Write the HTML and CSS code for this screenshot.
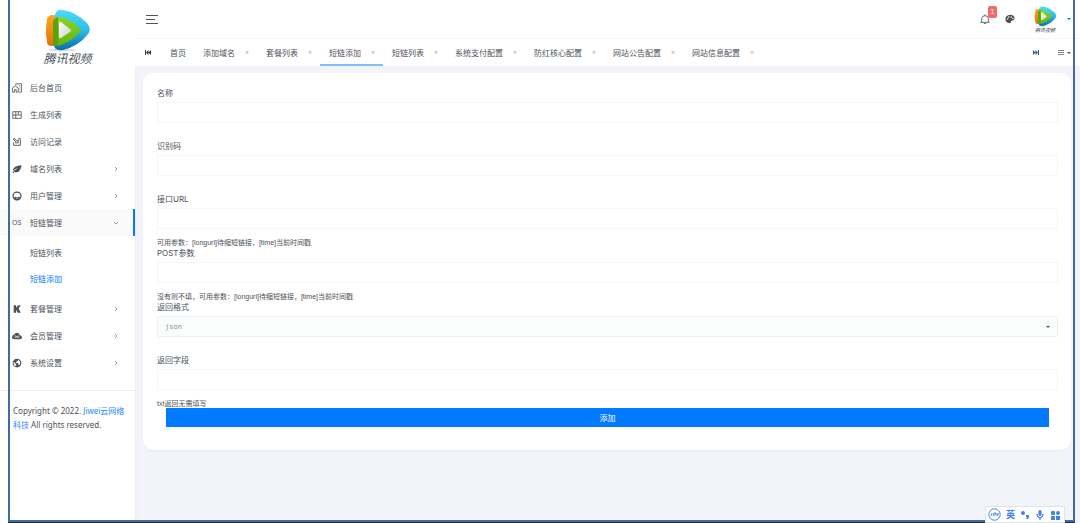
FILE: index.html
```html
<!DOCTYPE html>
<html lang="zh-CN">
<head>
<meta charset="utf-8">
<title>短链添加</title>
<link rel="stylesheet" href="styles.css">
</head>
<body>
<svg class="defs" aria-hidden="true">
  <defs>
    <linearGradient id="orange" x2="0" y2="1"><stop stop-color="#ffa51c"/><stop offset="1" stop-color="#e2700c"/></linearGradient>
    <linearGradient id="blue" x2="0" y2="1"><stop stop-color="#4fdcf6"/><stop offset=".5" stop-color="#2dbce6"/><stop offset="1" stop-color="#0b6ca8"/></linearGradient>
    <linearGradient id="green" x2="0" y2="1"><stop stop-color="#8ed321"/><stop offset="1" stop-color="#62b40c"/></linearGradient>
    <linearGradient id="white" x2="1" y2="1"><stop stop-color="#fff"/><stop offset="1" stop-color="#c9d0c8"/></linearGradient>
    <symbol id="play-logo" viewBox="0 0 46 43">
      <ellipse cx="17" cy="41" rx="14" ry="1.500" fill="#ddd"/>
      <path d="M2 10Q3 6 8 6L16 7V36L7 37Q2 37 2 33Q0 22 2 10Z" fill="url(#orange)"/>
      <path d="M10 6Q11 0 18 1Q31 3 42 14Q47 20 43 25Q34 37 18 41Q9 42 9 36Z" fill="url(#blue)"/>
      <path d="M8 13Q9 8 16 8Q28 11 36 21Q29 31 16 36Q10 38 8 35Z" fill="url(#green)"/>
      <path d="M8 13Q9 9 13 8V36Q9 37 8 35Z" fill="#5aa30c"/>
      <path d="M14 14Q14 12 16 13L25 20Q27 22 25 23L16 29Q14 30 14 28Z" fill="url(#white)"/>
    </symbol>
    <symbol id="chevron" viewBox="0 0 6 6"><path d="M2 1L4 3L2 5" fill="none" stroke="#888" stroke-width=".8"/></symbol>
  </defs>
</svg>
<div class="app">
  <aside class="sidebar">
    <a class="brand" href="#">
      <svg class="brand-mark"><use href="#play-logo"/></svg>
      <span class="brand-name">腾讯视频</span>
    </a>
    <nav class="nav">
      <a class="nav-item" href="#"><svg class="icon" viewBox="0 0 24 24" fill="none" stroke="currentColor" stroke-width="2"><path d="M9 5V2H23V22H17M1 22V12L8 7L15 12V22H10V16H6V22ZM17 7H20M18 12H20M18 16H20"/></svg>后台首页</a>
      <a class="nav-item" href="#"><svg class="icon" viewBox="0 0 24 24" fill="none" stroke="currentColor" stroke-width="2"><path d="M2 4H22V20H2ZM9 4V20M15 4V12M2 12H22"/></svg>生成列表</a>
      <a class="nav-item" href="#"><svg class="icon" viewBox="0 0 24 24" fill="none" stroke="currentColor" stroke-width="2.200"><path d="M4 13V20H20V4H15M15 7V14H8L10 11L4 7V4H7L12 9Z"/></svg>访问记录</a>
      <a class="nav-item" href="#"><svg class="icon" viewBox="0 0 24 24" fill="currentColor"><path d="M23 3Q13 3 7 7Q1 11 2 17Q7 11 15 9Q7 13 1 21L3 22L6 19Q13 22 18 16Q22 11 23 3Z"/></svg>域名列表<svg class="arrow"><use href="#chevron"/></svg></a>
      <a class="nav-item" href="#"><svg class="icon" viewBox="0 0 24 24"><circle cx="12" cy="12" r="9.500" fill="none" stroke="currentColor" stroke-width="3"/><path d="M4 15Q8 12 12 15Q16 12 20 15L18 20L12 22L6 20Z" fill="currentColor"/><path d="M9 17H15" stroke="#fff" stroke-width="1.500"/></svg>用户管理<svg class="arrow"><use href="#chevron"/></svg></a>
      <a class="nav-item active" href="#"><span class="icon-text">OS</span>短链管理<svg class="arrow open"><use href="#chevron"/></svg></a>
      <div class="subnav">
        <a href="#">短链列表</a>
        <a class="current" href="#">短链添加</a>
      </div>
      <a class="nav-item" href="#"><svg class="icon" viewBox="0 0 24 24" fill="currentColor"><path d="M4 3H10V9L15 3H21L16 11L21 21H14L10 14V21H4Z"/></svg>套餐管理<svg class="arrow"><use href="#chevron"/></svg></a>
      <a class="nav-item" href="#"><svg class="icon" viewBox="0 0 24 24"><path fill="currentColor" d="M6 20Q0 20 0 15Q0 10 5 9Q7 4 12 4Q18 4 19 10Q24 11 24 15Q24 20 19 20Z"/><path d="M12 14Q7 9 7 14Q7 18 12 14Q17 9 17 14Q17 18 12 14Z" fill="none" stroke="#fff" stroke-width="1.500"/></svg>会员管理<svg class="arrow"><use href="#chevron"/></svg></a>
      <a class="nav-item" href="#"><svg class="icon" viewBox="0 0 24 24"><circle cx="12" cy="12" r="10.500" fill="currentColor"/><path d="M4 9L10 15V19L12 20Q5 20 4 14ZM14 4V7L10 9V12H15V16L18 17Q22 10 17 6Z" fill="#fff"/></svg>系统设置<svg class="arrow"><use href="#chevron"/></svg></a>
    </nav>
    <p class="copyright">Copyright © 2022. <a href="#">Jiwei云网络科技</a> All rights reserved.</p>
  </aside>

  <div class="main">
    <header class="topbar">
      <button class="plain" type="button" aria-label="菜单"><svg class="burger" viewBox="0 0 12 9" stroke="#4d5259" stroke-width="1"><path d="M0 .5H12M0 4.500H9M0 8.500H12"/></svg></button>
      <div class="tools">
        <button class="plain bell" type="button" aria-label="通知"><svg class="tool-icon" viewBox="0 0 24 24"><path d="M1 20H23M4 20V11Q4 4 12 4Q20 4 20 11V20M12 1V4M9 23H15" fill="none" stroke="#4d5259" stroke-width="2"/></svg><span class="badge">1</span></button>
        <button class="plain palette" type="button" aria-label="主题"><svg class="tool-icon" viewBox="0 0 24 24"><path d="M12 2Q23 2 23 11Q23 16 17 16Q13 16 14 19Q14 22 11 22Q1 21 1 12Q2 3 12 2Z" fill="#4d5259"/><g fill="#fff"><circle cx="6" cy="12" r="1.800"/><circle cx="9" cy="7" r="1.800"/><circle cx="15" cy="7" r="1.800"/><circle cx="19" cy="11" r="1.800"/></g></svg></button>
        <button class="plain account" type="button" aria-label="账户"><span class="avatar"><svg class="avatar-mark"><use href="#play-logo"/></svg><span class="avatar-name">腾讯视频</span></span><span class="caret blue"></span></button>
      </div>
    </header>
    <div class="tabs">
      <button class="plain" type="button" aria-label="向前"><svg class="skip" viewBox="0 0 6 5"><path d="M0 0H1V5H0ZM3.500 0V5L1 2.500ZM6 0V5L3.500 2.500Z" fill="#333"/></svg></button>
      <nav class="tab-list">
        <a class="tab" href="#">首页</a>
        <a class="tab" href="#">添加域名<span class="close">×</span></a>
        <a class="tab" href="#">套餐列表<span class="close">×</span></a>
        <a class="tab selected" href="#">短链添加<span class="close">×</span></a>
        <a class="tab" href="#">短链列表<span class="close">×</span></a>
        <a class="tab" href="#">系统支付配置<span class="close">×</span></a>
        <a class="tab" href="#">防红核心配置<span class="close">×</span></a>
        <a class="tab" href="#">网站公告配置<span class="close">×</span></a>
        <a class="tab" href="#">网站信息配置<span class="close">×</span></a>
      </nav>
      <button class="plain" type="button" aria-label="向后"><svg class="skip" viewBox="0 0 6 5"><path d="M5 0H6V5H5ZM0 0V5L2.500 2.500ZM2.500 0V5L5 2.500Z" fill="#245f94"/></svg></button>
      <button class="plain more" type="button" aria-label="更多"><svg class="lines" viewBox="0 0 6 5" stroke="#888"><path d="M0 .5H6M0 2.500H6M0 4.500H6"/></svg><span class="caret"></span></button>
    </div>

    <form class="card">
      <div class="field"><label for="name">名称</label><input id="name" type="text"></div>
      <div class="field"><label for="code">识别码</label><input id="code" type="text"></div>
      <div class="field hinted"><label for="url">接口URL</label><input id="url" type="text"><small>可用参数：[longurl]待缩短链接，[time]当前时间戳</small></div>
      <div class="field hinted"><label for="post">POST参数</label><input id="post" type="text"><small>没有则不填，可用参数：[longurl]待缩短链接，[time]当前时间戳</small></div>
      <div class="field"><label for="format">返回格式</label><div class="select-wrap"><select id="format"><option>json</option></select><span class="caret tiny"></span></div></div>
      <div class="field hinted"><label for="key">返回字段</label><input id="key" type="text"><small>txt返回无需填写</small></div>
      <button class="submit" type="submit">添加</button>
    </form>
  </div>
</div>
<div class="window-frame"></div>
<div class="ime">
  <svg class="ime-logo" viewBox="0 0 13 13"><circle cx="6.500" cy="6.500" r="5.700" fill="none" stroke="#3d82f0"/><path d="M3 8L4 5M5 8L6 5H8L7 7H6M9 5V8L11 5" fill="none" stroke="#3d82f0" stroke-width=".9"/></svg>
  <span>英</span>
  <svg class="ime-icon" viewBox="0 0 10 10" fill="#3d82f0"><circle cx="3" cy="3" r="2"/><path d="M6 5H9V7Q9 9 6 9L7 7H6Z"/></svg>
  <svg class="ime-icon" viewBox="0 0 10 10"><rect x="3.500" width="3" height="6" rx="1.500" fill="#3d82f0"/><path d="M2 4Q2 7.500 5 7.500Q8 7.500 8 4M5 7V10" fill="none" stroke="#3d82f0" stroke-width="1.200"/></svg>
  <svg class="ime-icon" viewBox="0 0 10 10" fill="#3d82f0"><rect x="1" y="1" width="4" height="4" rx="1"/><circle cx="8" cy="3" r="2"/><rect x="1" y="6" width="4" height="4"/><rect x="6" y="6" width="4" height="4"/></svg>
</div>
</body>
</html>
```
FILE: styles.css
```css
* { box-sizing: border-box; }
body {
  margin: 0;
  background: #f3f4fa;
  color: #4d5259;
  font: 8px/14px "Noto Sans", "Noto Sans CJK SC", sans-serif;
}
a { color: inherit; text-decoration: none; }
.defs { position: absolute; width: 0; height: 0; }
.plain { display: flex; align-items: center; padding: 0; border: 0; background: none; color: inherit; }
.app { display: flex; min-height: 100vh; }

.sidebar { flex: 0 0 135px; background: #fff; box-shadow: 0 0 3px #e3e4e9; }
.brand { display: flex; flex-direction: column; align-items: center; height: 74px; padding: 9px 0 0; }
.brand-mark { width: 46px; height: 43px; }
.brand-name { font-size: 12px; line-height: 13px; font-style: italic; color: #4b5056; }
.nav-item { display: flex; align-items: center; height: 27px; padding: 0 16px 0 12px; }
.nav-item.active { background: #fafafb; border-right: 2px solid #007bff; padding-right: 14px; }
.icon { width: 10px; height: 10px; margin-right: 8px; }
.icon-text { width: 18px; font-size: 7px; }
.arrow { width: 6px; height: 6px; margin-left: auto; }
.arrow.open { transform: rotate(90deg); }
.subnav { padding: 4px 0 3px 30px; }
.subnav a { display: block; line-height: 26px; }
.subnav .current { color: #007bff; }
.copyright { margin: 14px 0 0; padding: 13px 8px 0 13px; border-top: 1px solid #eee; }
.copyright a { color: #2688ff; }

.main { flex: 1; min-width: 0; }
.topbar { display: flex; align-items: center; justify-content: space-between; height: 39px; padding: 0 9px 0 11px; background: #fff; border-bottom: 1px solid #f6f6f7; }
.burger { width: 12px; height: 9px; }
.tools { display: flex; align-items: center; }
.tool-icon { width: 10px; height: 10px; }
.bell { position: relative; margin-right: 15px; }
.badge { position: absolute; left: 8px; top: -8px; width: 9px; border-radius: 2px; background: #f96868; color: #fff; font-size: 7px; line-height: 12px; text-align: center; }
.palette { margin-right: 18px; }
.avatar { display: flex; flex-direction: column; align-items: center; width: 24px; margin-right: 10px; }
.avatar-mark { width: 23px; height: 21px; }
.avatar-name { font-size: 5px; line-height: 6px; font-style: italic; color: #4b5056; }
.caret { border: 2px solid transparent; border-top-color: #555; border-bottom: 0; }
.caret.blue { border-top-color: #007bff; }
.tabs { display: flex; align-items: center; height: 27px; padding: 0 9px 0 10px; background: #fff; }
.tab-list { display: flex; flex: 1; height: 27px; margin-left: 10px; }
.tab { display: flex; align-items: center; padding: 2px 8px 0 9px; border-bottom: 2px solid transparent; }
.tab.selected { border-color: #83bdf8; }
.close { width: 4px; margin-left: 10px; color: #aaa; font-size: 7px; }
.skip { width: 6px; height: 5px; }
.more { gap: 3px; margin-left: 19px; }
.lines { width: 6px; height: 5px; }

.card { margin: 7px 9px 0 8px; padding: 13px 13px 23px 14px; border-radius: 10px; background: #fff; box-shadow: 0 1px 1px #ebecf1; }
.field { display: flex; flex-direction: column; margin-bottom: 16px; }
.field.hinted { margin-bottom: 0; }
.field label { margin-bottom: 1px; font: 8px/15px Inter, "Noto Sans CJK SC", sans-serif; }
.field input, .field select { width: 100%; height: 21px; padding: 0 7px; border: 1px solid #f5f6f7; background: #fff; font: inherit; outline: 0; }
.select-wrap { display: flex; align-items: center; }
.field select { appearance: none; border-color: #edf0f0; border-radius: 2px; background: #fbfdfd; color: #888f96; font: 7px "DejaVu Sans Mono", monospace; }
.tiny { margin-left: -12px; margin-right: 8px; }
.field small { margin-top: 10px; font: 7px/7px "Liberation Sans", "Noto Sans CJK SC", sans-serif; }
.submit { display: block; width: calc(100% - 18px); height: 19px; margin: 1px 9px 0; padding: 0; border: 0; background: #007bff; color: #fff; font: inherit; }

.window-frame { position: fixed; inset: 0 5px 1px 8px; border: 2px solid #426c99; border-top: 0; box-shadow: 0 1px #1f2b3b; pointer-events: none; }
.ime { position: fixed; right: 15px; bottom: 0; display: flex; align-items: center; gap: 5px; height: 17px; padding: 0 4px 0 2px; border: 1px solid #e2e3e6; background: #fff; color: #3d82f0; font-size: 9px; font-weight: 700; }
.ime-logo { width: 13px; height: 13px; }
.ime-icon { width: 10px; height: 10px; }
```
